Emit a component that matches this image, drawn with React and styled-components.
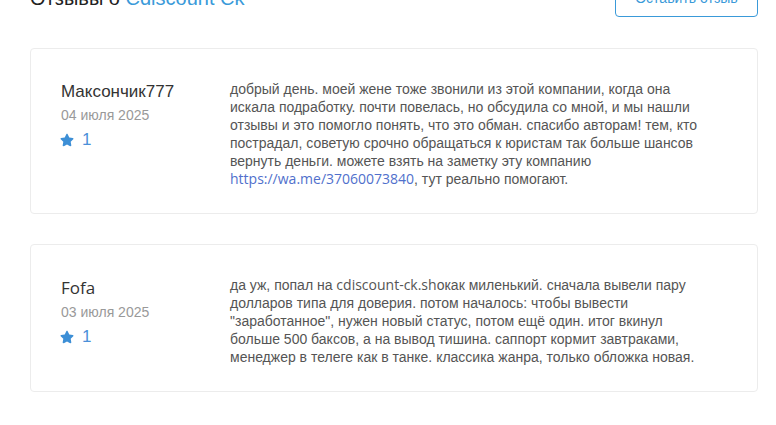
import React from 'react';
import styled, { createGlobalStyle } from 'styled-components';
import { FaStar } from 'react-icons/fa';

const GlobalStyle = createGlobalStyle`
    body {
        margin: 0;
        background: #fff;
        font-family: "Liberation Sans", Arial, sans-serif;
        color: #555;
        overflow: hidden;
    }
`;

const Page = styled.div`
    margin-top: -21px;
    padding: 0 18px 0 30px;
    width: 728px;
`;

const Header = styled.div`
    display: flex;
    align-items: center;
    justify-content: space-between;
    height: 38px;
`;

const Title = styled.h1`
    margin: 0;
    font-size: 20px;
    font-weight: normal;
    color: #222;
    line-height: 24px;

    & span {
        color: #3a9ad9;
    }
`;

const OutlineButton = styled.button`
    box-sizing: border-box;
    width: 143px;
    height: 38px;
    border: 1px solid #3a9ad9;
    border-radius: 4px;
    background: #fff;
    color: #3a9ad9;
    font-family: "Liberation Sans", Arial, sans-serif;
    font-size: 14px;
`;

const Card = styled.div`
    margin-top: 31px;
    border: 1px solid #ececec;
    border-radius: 4px;
    padding: 31px 30px 25px 30px;
    display: grid;
    grid-template-columns: 169px 475px;

    & + & {
        margin-top: 30px;
    }
`;

const Author = styled.div`
    display: flex;
    flex-direction: column;
    align-items: flex-start;
`;

const Name = styled.div`
    font-size: 17px;
    line-height: 24px;
    color: #333;
`;

const DateText = styled.div`
    margin-top: 1px;
    font-size: 14px;
    line-height: 20px;
    color: #999;
`;

const Rating = styled.div`
    margin-top: 3px;
    display: flex;
    align-items: center;
    gap: 8px;
    font-size: 17px;
    line-height: 24px;
    color: #4a90d9;

    & svg {
        color: #3d8fd6;
        margin-left: -1px;
    }
`;

const Body = styled.p`
    margin: 0;
    font-size: 14px;
    line-height: 18px;
    color: #555;
`;

const Latin = styled.span`
    font-family: "Open Sans", sans-serif;
`;

const Link = styled.a`
    font-family: "Open Sans", sans-serif;
    color: #5070cc;
    text-decoration: none;
`;

const reviews = [
    {
        name: 'Максончик777',
        date: '04 июля 2025',
        rating: 1,
        text: (
            <>
                добрый день. моей жене тоже звонили из этой компании, когда она искала подработку. почти повелась, но обсудила со мной, и мы нашли отзывы и это помогло понять, что это обман. спасибо авторам! тем, кто пострадал, советую срочно обращаться к юристам так больше шансов вернуть деньги. можете взять на заметку эту компанию{' '}
                <Link href="#">https://wa.me/37060073840</Link>, тут реально помогают.
            </>
        )
    },
    {
        name: <Latin>Fofa</Latin>,
        date: '03 июля 2025',
        rating: 1,
        text: (
            <>
                да уж, попал на <Latin>cdiscount-ck.sh</Latin>окак миленький. сначала вывели пару долларов типа для доверия. потом началось: чтобы вывести "заработанное", нужен новый статус, потом ещё один. итог вкинул больше 500 баксов, а на вывод тишина. саппорт кормит завтраками, менеджер в телеге как в танке. классика жанра, только обложка новая.
            </>
        )
    }
];

function Review({ review }) {
    return (
        <Card>
            <Author>
                <Name>{review.name}</Name>
                <DateText>{review.date}</DateText>
                <Rating>
                    <FaStar size={14} />
                    <span>{review.rating}</span>
                </Rating>
            </Author>
            <Body>{review.text}</Body>
        </Card>
    );
}

export default function App() {
    return (
        <Page>
            <GlobalStyle />
            <Header>
                <Title>
                    Отзывы о <span>Cdiscount Ck</span>
                </Title>
                <OutlineButton>Оставить отзыв</OutlineButton>
            </Header>
            {reviews.map((review, i) => (
                <Review key={i} review={review} />
            ))}
        </Page>
    );
}
